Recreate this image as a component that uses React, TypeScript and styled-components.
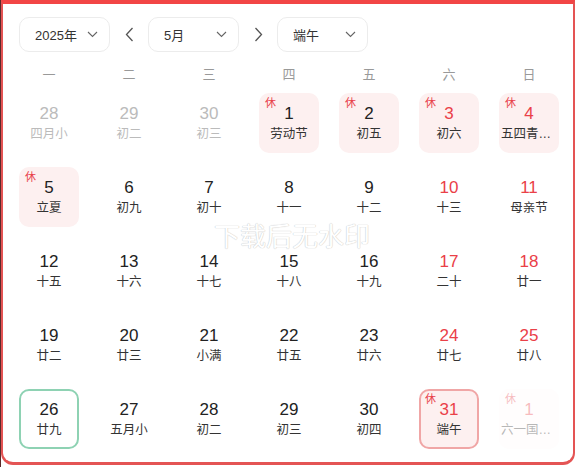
import React from "react";
import styled, { createGlobalStyle } from "styled-components";

const Global = createGlobalStyle`
  html, body { margin: 0; padding: 0; background: #fff; }
  body { font-family: "Liberation Sans", "Noto Sans CJK SC", sans-serif; }
`;

const Outer = styled.div`
  width: 578px;
  height: 467px;
  box-sizing: border-box;
  border-left: 1px solid #5a2a2a;
  background: #fff;
`;

const Frame = styled.div`
  position: relative;
  width: 574px;
  height: 465px;
  box-sizing: border-box;
  border: 2px solid #e45454;
  border-top: 4px solid #f24545;
  border-bottom: 3px solid #e45454;
  border-radius: 0 0 12px 12px;
  padding: 13px 0 0 6px;
  overflow: hidden;
`;

const Header = styled.div`
  display: flex;
  align-items: center;
  padding-left: 10px;
  height: 35px;
`;

const Select = styled.div`
  width: 91px;
  height: 35px;
  box-sizing: border-box;
  border: 1px solid #ececec;
  border-radius: 10px;
  display: flex;
  align-items: center;
  justify-content: space-between;
  padding: 0 11px 0 15px;
  font-size: 13px;
  color: #333;
`;

const ArrowBtn = styled.div`
  width: 38px;
  display: flex;
  align-items: center;
  justify-content: center;
  color: #555;
`;

const Week = styled.div`
  display: grid;
  grid-template-columns: repeat(7, 80px);
  margin-top: 14px;
  height: 18px;
  line-height: 18px;
  font-size: 13px;
  color: #999;
  text-align: center;
`;

const Grid = styled.div`
  display: grid;
  grid-template-columns: repeat(7, 80px);
  grid-auto-rows: 60px;
  row-gap: 14px;
  margin-top: 9px;
`;

const Cell = styled.div<{
  $rest?: boolean;
  $today?: boolean;
  $selected?: boolean;
  $faded?: boolean;
}>`
  position: relative;
  justify-self: center;
  width: 60px;
  height: 60px;
  box-sizing: border-box;
  border-radius: 10px;
  display: flex;
  flex-direction: column;
  align-items: center;
  justify-content: center;
  gap: 2px;
  background: ${(p) =>
    p.$faded ? "#fffafa" : p.$rest || p.$selected ? "#fdf0f0" : "transparent"};
  border: 2px solid
    ${(p) => (p.$today ? "#8ed2b3" : p.$selected ? "#f0a6a6" : "transparent")};
  opacity: ${(p) => (p.$faded ? 0.35 : 1)};
`;

const Num = styled.div<{ $tone: "normal" | "gray" | "red" }>`
  font-size: 17px;
  line-height: 20px;
  color: ${(p) => (p.$tone === "gray" ? "#bbb" : p.$tone === "red" ? "#ea4048" : "#222")};
`;

const Lunar = styled.div<{ $gray?: boolean }>`
  font-size: 12.5px;
  line-height: 17px;
  color: ${(p) => (p.$gray ? "#bbb" : "#333")};
  max-width: 56px;
  white-space: nowrap;
  overflow: hidden;
  text-overflow: ellipsis;
`;

const Rest = styled.span`
  position: absolute;
  left: 4px;
  top: 2px;
  font-size: 11px;
  line-height: 13px;
  color: #e8404a;
`;

const Watermark = styled.div`
  position: absolute;
  left: 211px;
  top: 218px;
  font-size: 26px;
  line-height: 30px;
  color: #fff;
  text-shadow: 0 0 1px #c8c8c8, 0 0 1px #c8c8c8;
  pointer-events: none;
`;

const Chevron = () => (
  <svg width="11" height="7" viewBox="0 0 11 7" fill="none">
    <path d="M1 1l4.5 4.5L10 1" stroke="#666" strokeWidth="1.1" />
  </svg>
);

const Side = ({ dir }: { dir: "l" | "r" }) => (
  <svg width="9" height="15" viewBox="0 0 9 15" fill="none">
    <path
      d={dir === "l" ? "M7.5 1L1.5 7.5 7.5 14" : "M1.5 1l6 6.5-6 6.5"}
      stroke="#555"
      strokeWidth="1.3"
    />
  </svg>
);

type Day = {
  n: number;
  l: string;
  tone: "normal" | "gray" | "red";
  rest?: boolean;
  today?: boolean;
  selected?: boolean;
  faded?: boolean;
};

const days: Day[] = [
  { n: 28, l: "四月小", tone: "gray" },
  { n: 29, l: "初二", tone: "gray" },
  { n: 30, l: "初三", tone: "gray" },
  { n: 1, l: "劳动节", tone: "normal", rest: true },
  { n: 2, l: "初五", tone: "normal", rest: true },
  { n: 3, l: "初六", tone: "red", rest: true },
  { n: 4, l: "五四青年节", tone: "red", rest: true },
  { n: 5, l: "立夏", tone: "normal", rest: true },
  { n: 6, l: "初九", tone: "normal" },
  { n: 7, l: "初十", tone: "normal" },
  { n: 8, l: "十一", tone: "normal" },
  { n: 9, l: "十二", tone: "normal" },
  { n: 10, l: "十三", tone: "red" },
  { n: 11, l: "母亲节", tone: "red" },
  { n: 12, l: "十五", tone: "normal" },
  { n: 13, l: "十六", tone: "normal" },
  { n: 14, l: "十七", tone: "normal" },
  { n: 15, l: "十八", tone: "normal" },
  { n: 16, l: "十九", tone: "normal" },
  { n: 17, l: "二十", tone: "red" },
  { n: 18, l: "廿一", tone: "red" },
  { n: 19, l: "廿二", tone: "normal" },
  { n: 20, l: "廿三", tone: "normal" },
  { n: 21, l: "小满", tone: "normal" },
  { n: 22, l: "廿五", tone: "normal" },
  { n: 23, l: "廿六", tone: "normal" },
  { n: 24, l: "廿七", tone: "red" },
  { n: 25, l: "廿八", tone: "red" },
  { n: 26, l: "廿九", tone: "normal", today: true },
  { n: 27, l: "五月小", tone: "normal" },
  { n: 28, l: "初二", tone: "normal" },
  { n: 29, l: "初三", tone: "normal" },
  { n: 30, l: "初四", tone: "normal" },
  { n: 31, l: "端午", tone: "red", rest: true, selected: true },
  { n: 1, l: "六一国际儿童节", tone: "red", rest: true, faded: true },
];

const weekNames = ["一", "二", "三", "四", "五", "六", "日"];

export default function App() {
  return (
    <>
      <Global />
      <Outer>
        <Frame>
          <Header>
            <Select>
              <span>2025年</span>
              <Chevron />
            </Select>
            <ArrowBtn>
              <Side dir="l" />
            </ArrowBtn>
            <Select>
              <span>5月</span>
              <Chevron />
            </Select>
            <ArrowBtn>
              <Side dir="r" />
            </ArrowBtn>
            <Select>
              <span>端午</span>
              <Chevron />
            </Select>
          </Header>
          <Week>
            {weekNames.map((w) => (
              <div key={w}>{w}</div>
            ))}
          </Week>
          <Grid>
            {days.map((d, i) => (
              <Cell
                key={i}
                $rest={d.rest}
                $today={d.today}
                $selected={d.selected}
                $faded={d.faded}
              >
                {d.rest && <Rest>休</Rest>}
                <Num $tone={d.tone}>{d.n}</Num>
                <Lunar $gray={d.tone === "gray"}>{d.l}</Lunar>
              </Cell>
            ))}
          </Grid>
          <Watermark>下载后无水印</Watermark>
        </Frame>
      </Outer>
    </>
  );
}
